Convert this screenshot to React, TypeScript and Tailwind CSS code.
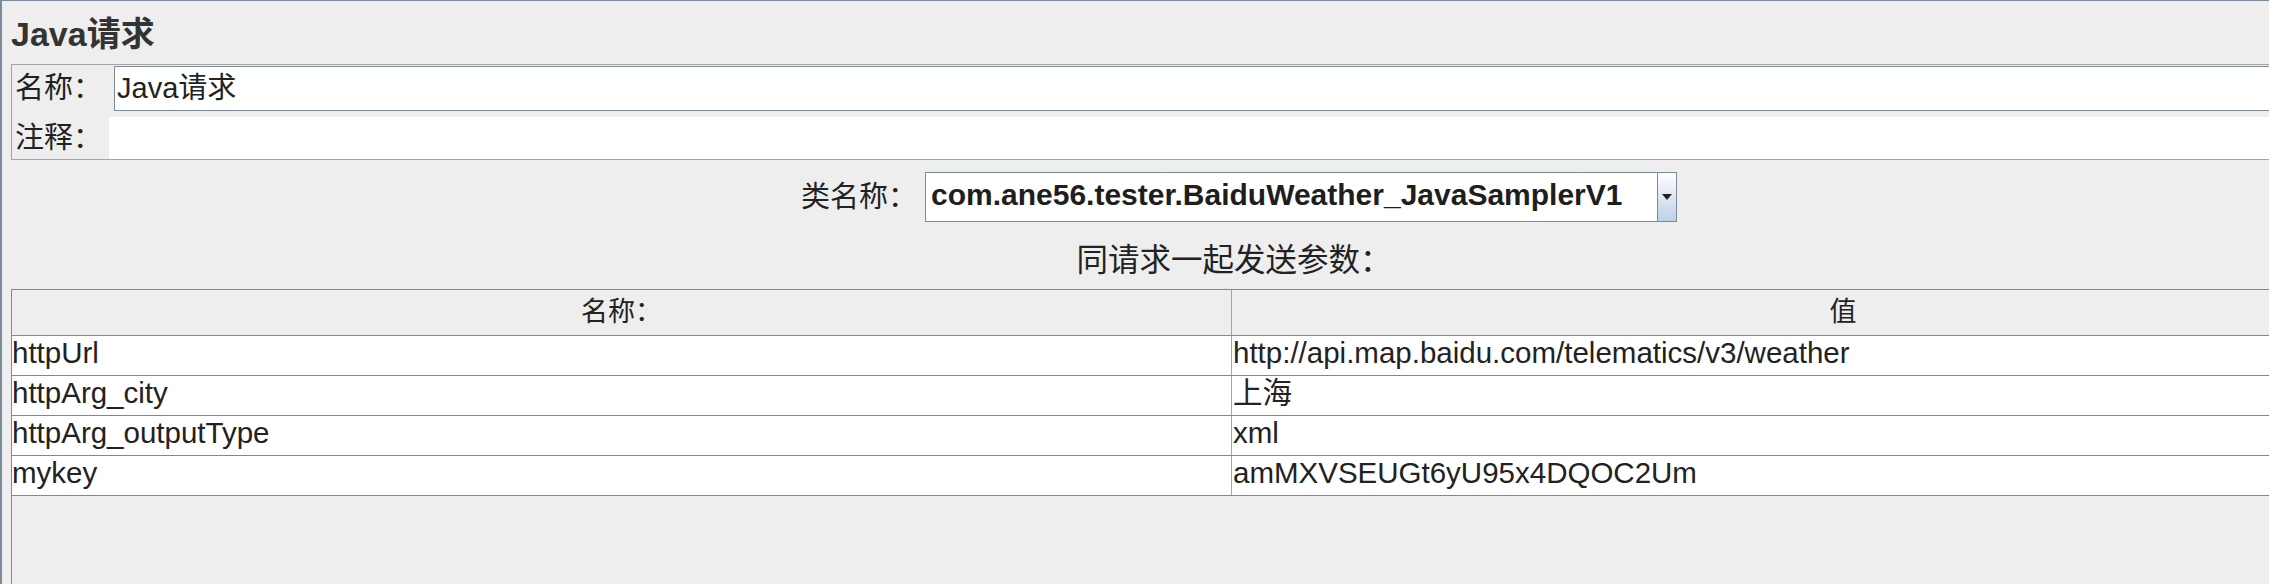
import React from "react";

const FONT = "font-['Liberation_Sans','Noto_Sans_CJK_SC',sans-serif]";

type Param = { name: string; value: string };

const params: Param[] = [
  { name: "httpUrl", value: "http://api.map.baidu.com/telematics/v3/weather" },
  { name: "httpArg_city", value: "上海" },
  { name: "httpArg_outputType", value: "xml" },
  { name: "mykey", value: "amMXVSEUGt6yU95x4DQOC2Um" },
];

function ComboBox({ value }: { value: string }) {
  return (
    <div className="flex h-[50px] w-[752px] border border-[#7a8a99] bg-white">
      <div className="flex flex-1 items-center pb-[5px] pl-[5px] text-[30px] font-bold leading-none text-[#1e1e1e]">
        {value}
      </div>
      <div className="flex w-[19px] items-center justify-center border-l border-[#7a8a99] bg-linear-to-b from-white to-[#bcd1e8]">
        <svg width="10" height="6" viewBox="0 0 10 6">
          <path d="M0 0h10L5 6z" fill="#222" />
        </svg>
      </div>
    </div>
  );
}

export default function App() {
  return (
    <div className="h-[584px] w-[2269px] overflow-hidden bg-[#eeeeee]">
      <div
        className={`flex h-[584px] w-[2466px] flex-col border-l-2 border-t border-[#7a8a99] text-[#222] ${FONT}`}
      >
        {/* title */}
        <div className="h-[63px] shrink-0 pl-[9px] pt-[16px] text-[34px] font-bold leading-[34px] text-[#333]">
          Java请求
        </div>

        {/* name / comment panel */}
        <div className="ml-[9px] mr-[11px] shrink-0 border border-[#a5a5a5]">
          <div className="flex h-[46px] pt-px">
            <div className="flex w-[102px] items-center pl-[3px] text-[29px] leading-none">名称：</div>
            <div className="flex h-[45px] flex-1 items-center border border-[#7a8a99] bg-white pl-[2px] text-[29px] leading-none">
              Java请求
            </div>
          </div>
          <div className="h-[6px]" />
          <div className="flex h-[42px]">
            <div className="flex w-[97px] items-center pl-[3px] text-[29px] leading-none">注释：</div>
            <div className="flex-1 bg-white" />
          </div>
        </div>

        {/* class name */}
        <div className="mt-[12px] flex h-[50px] shrink-0 items-center justify-center pl-[10px]">
          <div className="mr-[8px] w-[116px] whitespace-nowrap text-[29px] leading-none">类名称：</div>
          <ComboBox value="com.ane56.tester.BaiduWeather_JavaSamplerV1" />
        </div>

        <div className="flex h-[67px] shrink-0 items-center justify-center pt-[10px] text-[31.5px] leading-none">
          同请求一起发送参数：
        </div>

        {/* parameters table */}
        <div className="ml-[9px] mr-[11px] flex-1 border-l border-r border-t border-[#7a8a99]">
          <div className="flex h-[46px] border-b border-[#7a8a99]">
            <div className="flex w-[1220px] items-center justify-center border-r border-[#a5a5a5] text-[27px] leading-none">
              名称：
            </div>
            <div className="flex flex-1 items-center justify-center text-[27px] leading-none">值</div>
          </div>
          {params.map((p) => (
            <div key={p.name} className="flex h-[40px] border-b border-[#7a8a99] bg-white text-[29.5px] leading-none">
              <div className="flex w-[1220px] items-center border-r border-[#a5a5a5] pb-[5px]">{p.name}</div>
              <div className="flex flex-1 items-center pb-[5px] pl-px">{p.value}</div>
            </div>
          ))}
        </div>
      </div>
    </div>
  );
}
